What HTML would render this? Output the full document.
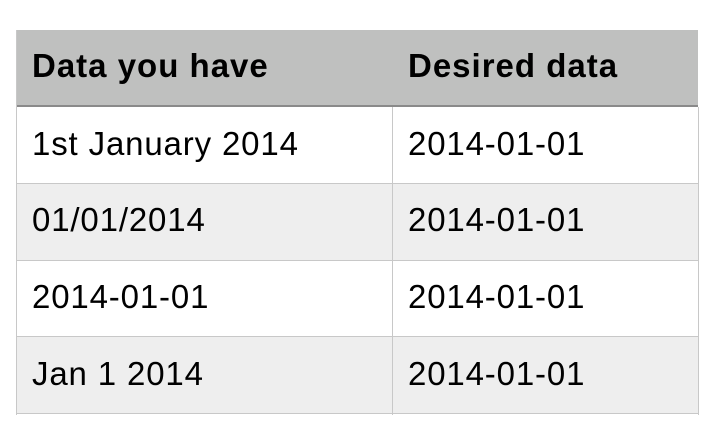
<!DOCTYPE html>
<html><head><style>
body{margin:0;width:714px;height:428px;background:#fff;position:relative;font-family:"Liberation Sans",Arial,sans-serif;overflow:hidden}
.r{position:absolute;left:16px;width:682px;border-bottom:1px solid #c8c8c8}
.c{position:absolute;font-size:33px;color:#000;line-height:1;letter-spacing:0.85px}
.v{position:absolute;top:30px;width:1px;height:385px;background:#c8c8c8}
</style></head><body>
<div class="r" style="top:30px;height:75px;background:#bfc0bf;border-bottom:2px solid #8a8a8a"></div>
<div class="r" style="top:107px;height:76px;background:#fff"></div>
<div class="r" style="top:184px;height:76px;background:#eeeeee"></div>
<div class="r" style="top:261px;height:75px;background:#fff"></div>
<div class="r" style="top:337px;height:76px;background:#eeeeee"></div>
<div class="v" style="left:16px;top:30px"></div>
<div class="v" style="left:392px;top:107px;height:308px"></div>
<div class="v" style="left:698px;top:107px;height:308px"></div>
<div class="c" style="left:32px;top:49px;font-weight:bold;letter-spacing:1px">Data you have</div>
<div class="c" style="left:408px;top:49px;font-weight:bold;letter-spacing:1px">Desired data</div>
<div class="c" style="left:32px;top:127px">1st January 2014</div>
<div class="c" style="left:408px;top:127px">2014-01-01</div>
<div class="c" style="left:32px;top:203px">01/01/2014</div>
<div class="c" style="left:408px;top:203px">2014-01-01</div>
<div class="c" style="left:32px;top:280px">2014-01-01</div>
<div class="c" style="left:408px;top:280px">2014-01-01</div>
<div class="c" style="left:32px;top:357px">Jan 1 2014</div>
<div class="c" style="left:408px;top:357px">2014-01-01</div>
</body></html>
